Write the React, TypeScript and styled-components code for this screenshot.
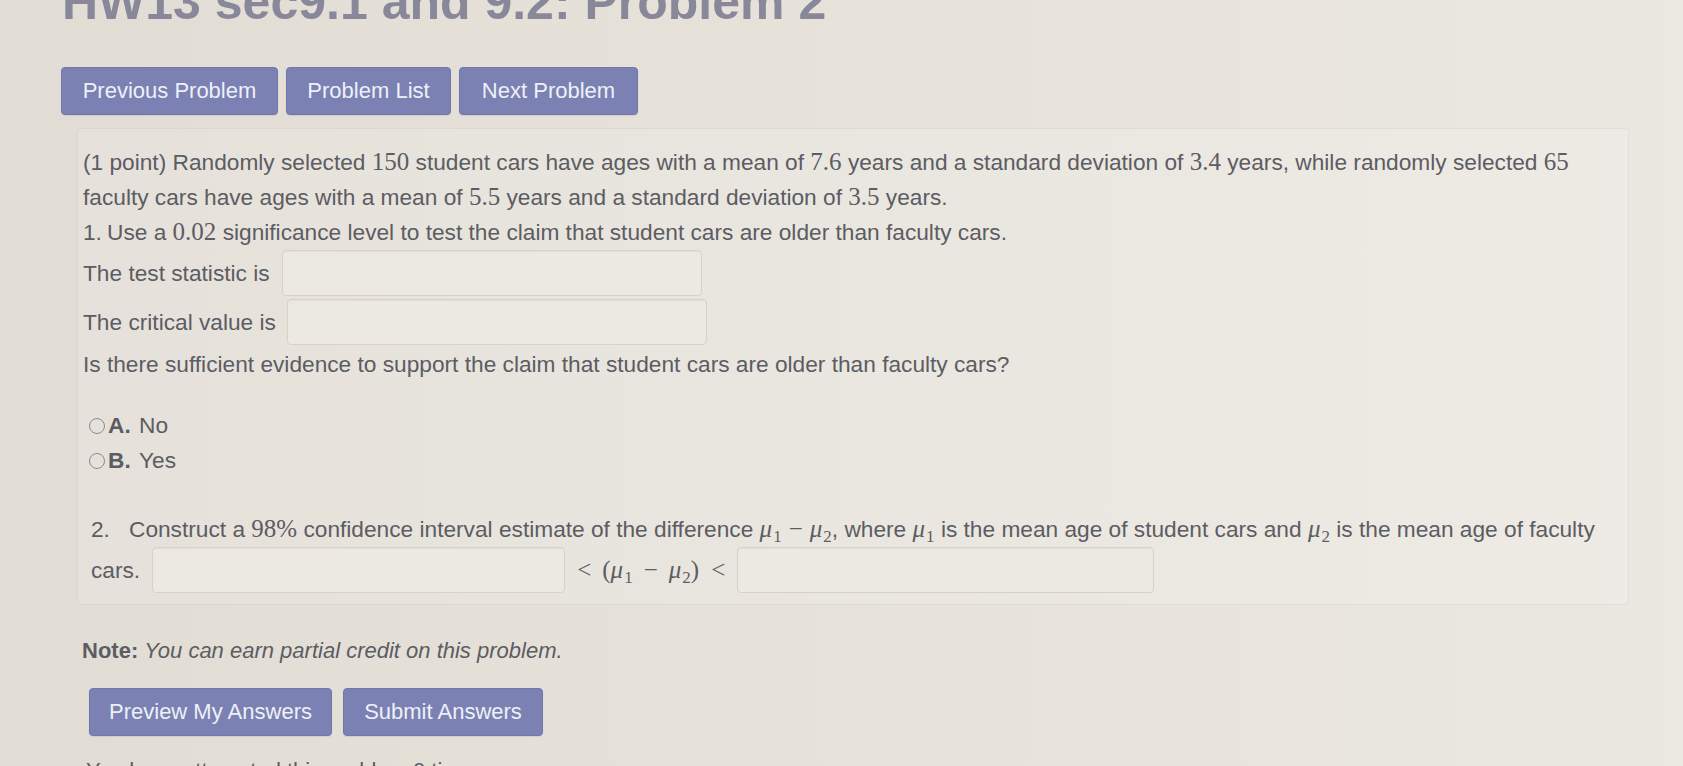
import React from 'react';
import styled, { createGlobalStyle } from 'styled-components';

const GlobalStyle = createGlobalStyle`
  html, body {
    margin: 0;
    padding: 0;
    height: 100%;
    overflow: hidden;
  }
  body {
    background: linear-gradient(90deg, #e1ddd4 0%, #e6e2da 45%, #ebe8e1 100%);
    font-family: "Liberation Sans", Arial, sans-serif;
    color: #5c5c63;
  }
`;

const Page = styled.div`
  padding-left: 61px;
  width: 1622px;
`;

const Title = styled.h1`
  margin: -23px 0 0 1px;
  font-size: 50px;
  line-height: 50px;
  font-weight: bold;
  color: #88889a;
  white-space: nowrap;
`;

const NavBar = styled.div`
  display: flex;
  gap: 8px;
  margin-top: 40px;
`;

const Button = styled.button<{ $w: number }>`
  width: ${(p) => p.$w}px;
  height: 48px;
  padding: 0;
  border: 1px solid #7077aa;
  border-radius: 4px;
  background: #7b81b3;
  color: #eef0f7;
  font-family: "Liberation Sans", Arial, sans-serif;
  font-size: 22px;
  box-shadow: 0 1px 1px rgba(0, 0, 0, 0.08);
`;

const ProblemBox = styled.div`
  margin: 13px 0 0 16px;
  width: 1552px;
  height: 477px;
  box-sizing: border-box;
  padding: 16px 6px 0 5px;
  border: 1px solid rgba(0, 0, 0, 0.05);
  border-radius: 4px;
  background: rgba(255, 255, 255, 0.14);
  font-size: 22.7px;
  line-height: 35px;
`;

const Line = styled.div<{ $indent?: number }>`
  white-space: nowrap;
  padding-left: ${(p) => p.$indent ?? 0}px;
`;

const ItemNum = styled.span<{ $w: number }>`
  display: inline-block;
  width: ${(p) => p.$w}px;
`;

const M = styled.span`
  font-family: "Liberation Serif", "Times New Roman", serif;
  font-size: 25px;
  line-height: 1;
`;

const Op = styled(M)<{ $l?: number; $r?: number }>`
  margin-left: ${(p) => p.$l ?? 7}px;
  margin-right: ${(p) => p.$r ?? 7}px;
`;

const MuGlyph = styled.span`
  font-family: "Liberation Serif", "Times New Roman", serif;
  font-style: italic;
  font-size: 25px;
  line-height: 1;
`;

const Sub = styled.sub`
  font-style: normal;
  font-size: 17px;
  vertical-align: -5px;
  line-height: 0;
  margin-left: 1px;
`;

const AnswerRow = styled.div<{ $gap: number; $mt?: number }>`
  display: flex;
  align-items: center;
  gap: ${(p) => p.$gap}px;
  margin-top: ${(p) => p.$mt ?? 0}px;
  white-space: nowrap;
`;

const AnswerInput = styled.input<{ $w: number }>`
  width: ${(p) => p.$w}px;
  height: 46px;
  box-sizing: border-box;
  border: 1px solid #d6d2ca;
  border-radius: 4px;
  background: #ece9e3;
  box-shadow: inset 0 1px 1px rgba(0, 0, 0, 0.04);
`;

const Question = styled.div`
  margin-top: 2px;
`;

const Choices = styled.div`
  margin-top: 26px;
  padding-left: 6px;
  line-height: 35px;
`;

const Choice = styled.label`
  display: flex;
  align-items: center;
  gap: 2px;
`;

const Radio = styled.span`
  display: inline-block;
  width: 14px;
  height: 14px;
  border: 1.5px solid #8a8a90;
  border-radius: 50%;
  margin-right: 1px;
`;

const Second = styled.div`
  margin-top: 34px;
`;

const Note = styled.p`
  margin: 28px 0 0 21px;
  font-size: 22px;
  line-height: 35px;
  b { font-weight: bold; }
  i { font-style: italic; }
`;

const SubmitBar = styled.div`
  display: flex;
  gap: 11px;
  margin: 20px 0 0 28px;
`;

const Footer = styled.p`
  margin: 17px 0 0 25px;
  font-size: 22px;
  line-height: 35px;
`;

const Mu = ({ n }: { n: number }) => (
  <MuGlyph>
    μ<Sub>{n}</Sub>
  </MuGlyph>
);

export default function App() {
  return (
    <>
      <GlobalStyle />
      <Page>
        <Title>HW13 sec9.1 and 9.2: Problem 2</Title>
        <NavBar>
          <Button $w={217}>Previous Problem</Button>
          <Button $w={165}>Problem List</Button>
          <Button $w={179}>Next Problem</Button>
        </NavBar>

        <ProblemBox>
          <Line>
            (1 point) Randomly selected <M>150</M> student cars have ages with a mean of <M>7.6</M> years and a
            standard deviation of <M>3.4</M> years, while randomly selected <M>65</M>
          </Line>
          <Line>
            faculty cars have ages with a mean of <M>5.5</M> years and a standard deviation of <M>3.5</M> years.
          </Line>
          <Line>
            <ItemNum $w={24}>1.</ItemNum>Use a <M>0.02</M> significance level to test the claim that student cars are
            older than faculty cars.
          </Line>
          <AnswerRow $gap={12}>
            The test statistic is <AnswerInput $w={420} />
          </AnswerRow>
          <AnswerRow $gap={11} $mt={3}>
            The critical value is <AnswerInput $w={420} />
          </AnswerRow>
          <Question>
            Is there sufficient evidence to support the claim that student cars are older than faculty cars?
          </Question>
          <Choices>
            <Choice>
              <Radio />
              <b>A.</b>&nbsp;No
            </Choice>
            <Choice>
              <Radio />
              <b>B.</b>&nbsp;Yes
            </Choice>
          </Choices>
          <Second>
            <Line $indent={8}>
              <ItemNum $w={38}>2.</ItemNum>Construct a <M>98%</M> confidence interval estimate of the difference{' '}
              <Mu n={1} />
              <Op>−</Op>
              <Mu n={2} />, where <Mu n={1} /> is the mean age of student cars and <Mu n={2} /> is the mean age of
              faculty
            </Line>
            <AnswerRow $gap={12}>
              <Line $indent={8}>cars.</Line>
              <AnswerInput $w={413} />
              <span>
                <Op $l={0} $r={11}>&lt;</Op>
                <M>(</M>
                <Mu n={1} />
                <Op $l={11} $r={11}>−</Op>
                <Mu n={2} />
                <M>)</M>
                <Op $l={12} $r={0}>&lt;</Op>
              </span>
              <AnswerInput $w={417} />
            </AnswerRow>
          </Second>
        </ProblemBox>

        <Note>
          <b>Note:</b> <i>You can earn partial credit on this problem.</i>
        </Note>
        <SubmitBar>
          <Button $w={243}>Preview My Answers</Button>
          <Button $w={200}>Submit Answers</Button>
        </SubmitBar>
        <Footer>You have attempted this problem 0 times.</Footer>
      </Page>
    </>
  );
}
